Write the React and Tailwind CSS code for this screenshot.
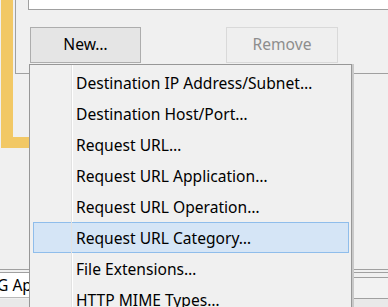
import React from "react";

const items = [
  "Destination IP Address/Subnet…",
  "Destination Host/Port…",
  "Request URL…",
  "Request URL Application…",
  "Request URL Operation…",
  "Request URL Category…",
  "File Extensions…",
  "HTTP MIME Types…",
];

const ContextMenu = ({ active }) => (
  <div className="absolute left-[29px] top-[64px] w-[323px] h-[260px] bg-[#f0f0f0] border border-[#979797] shadow-[2px_0_0_#c9c9c9] pt-[2px]">
    {/* gutter line */}
    <div className="absolute left-[41px] top-0 bottom-0 w-px bg-[#e2e2e2] z-10" />
    <div className="absolute left-[42px] top-0 bottom-0 w-px bg-white" />
    {items.map((label, i) => (
      <div
        key={label}
        className={
          i === active
            ? "relative ml-[3px] mr-[2px] h-[31px] border border-[#8fbdeb] bg-[#d5e5f6] pl-[42px] leading-[30px] text-black"
            : "relative ml-[3px] mr-[2px] h-[31px] border border-transparent pl-[42px] leading-[30px] text-black"
        }
      >
        {label}
      </div>
    ))}
  </div>
);

export default function App() {
  return (
    <div
      className="relative w-[388px] h-[307px] overflow-hidden bg-[#f0f0f0] text-[15.6px]"
      style={{ fontFamily: '"Noto Sans", "Open Sans", sans-serif' }}
    >
      {/* yellow focus frame around the group box */}
      <div className="ml-px w-[330px] h-[148px] border-l-[12px] border-b-[11px] border-[#f2c865]">
        <div className="ml-[2px] w-[400px] h-[74px] border-l border-b border-[#a0a0a0]">
          <div className="ml-[12px] h-[10px] border-l border-b border-[#a0a0a0] bg-white" />
          <div className="flex mt-[17px]">
            <div className="ml-[14px] w-[111px] h-[36px] border border-[#adadad] bg-[#e5e5e5] flex items-center justify-center text-black">
              New…
            </div>
            <div className="ml-[85px] w-[112px] h-[36px] border border-[#d9d9d9] bg-[#efefef] flex items-center justify-center text-[#8d8d8d]">
              Remove
            </div>
          </div>
        </div>
      </div>

      {/* lower tab strip */}
      <div className="mt-[121px] border-t border-[#a0a0a0] h-[3px]" />
      <div className="flex border-t border-[#a0a0a0]">
        <div className="w-[120px] h-[25px] bg-white border-b border-[#b9b9b9] -ml-[3px] leading-[25px] text-black">
          G Apps
        </div>
        <div className="flex-1 mt-[4px] h-[22px] border-t border-b border-[#a0a0a0] bg-[#f2f2f2]" />
      </div>
      <div className="h-[20px] bg-[#e9e9e9]" />

      <ContextMenu active={5} />
    </div>
  );
}
